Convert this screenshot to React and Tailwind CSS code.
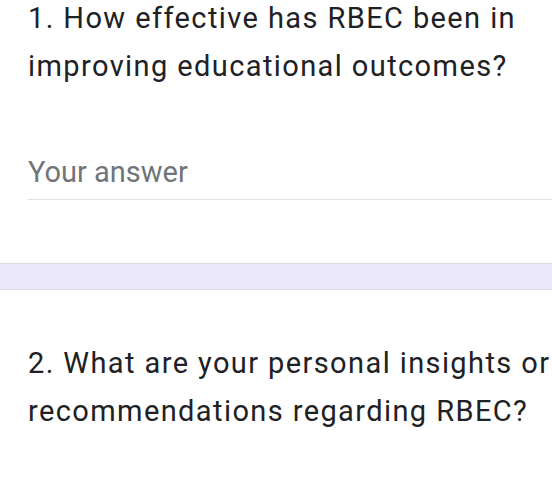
export default function App() {
  return (
    <div className="w-[552px] h-[483px] overflow-hidden bg-white font-['Roboto',sans-serif]">
      {/* Question 1 */}
      <div className="pl-7 -mt-[6px]">
        <div className="w-[560px] text-[29px] leading-[48px] tracking-[1.4px] text-[#202124]">
          1. How effective has RBEC been in improving educational outcomes?
        </div>
        <div className="mt-[62px] pb-[7px] border-b border-[#e0e0e0]">
          <div className="text-[29px] leading-[40px] text-[#70757a]">Your answer</div>
        </div>
      </div>

      {/* separator band */}
      <div className="mt-[63px] h-[27px] border-y border-[#dadce0] bg-[#ebe9fb]"></div>

      {/* Question 2 */}
      <div className="pl-7 mt-[49px]">
        <div className="w-[560px] text-[29px] leading-[48px] tracking-[1.4px] text-[#202124]">
          2. What are your personal insights or recommendations regarding RBEC?
        </div>
      </div>
    </div>
  );
}
